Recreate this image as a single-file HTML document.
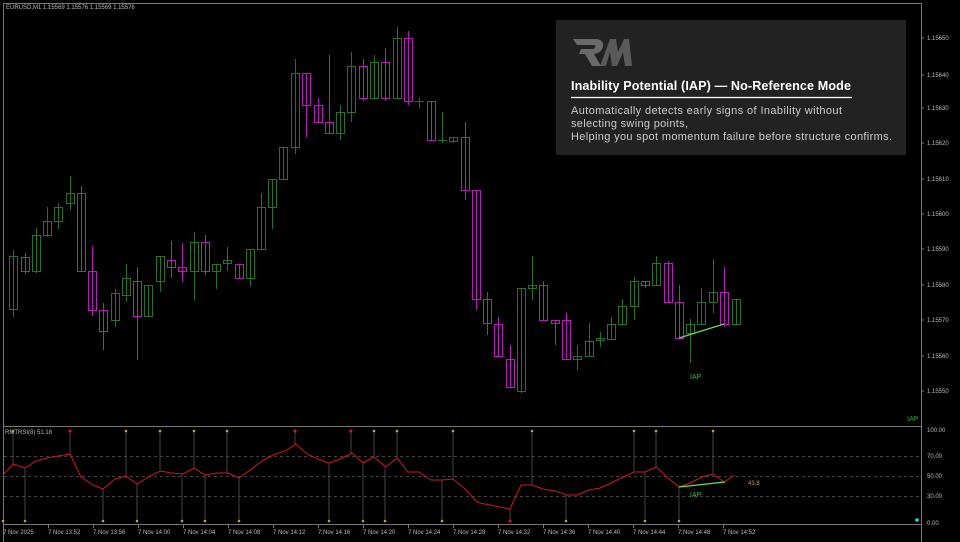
<!DOCTYPE html>
<html><head><meta charset="utf-8"><style>
html,body{margin:0;padding:0;background:#000;width:960px;height:542px;overflow:hidden}
svg{display:block}
.ax{font-family:"Liberation Sans",sans-serif;font-size:6px;fill:#bbb}
rect{fill:none}
</style></head><body>
<svg width="960" height="542" viewBox="0 0 960 542" xmlns="http://www.w3.org/2000/svg">
<rect x="0" y="0" width="960" height="542" style="fill:#000"/>
<polyline points="3.5,542 3.5,3.5 921.5,3.5 921.5,542" stroke="#777" fill="none"/>
<line x1="3" y1="426.5" x2="922" y2="426.5" stroke="#777"/>
<line x1="3" y1="524.5" x2="922" y2="524.5" stroke="#777"/>
<text x="6" y="9" class="ax">EURUSD,M1  1.15569 1.15576 1.15569 1.15576</text>
<g class="ax">
<text x="927" y="40">1.15650</text><text x="927" y="77">1.15640</text><text x="927" y="110">1.15630</text>
<text x="927" y="145">1.15620</text><text x="927" y="181">1.15610</text><text x="927" y="216">1.15600</text>
<text x="927" y="251">1.15590</text><text x="927" y="287">1.15580</text><text x="927" y="322">1.15570</text>
<text x="927" y="358">1.15560</text><text x="927" y="393">1.15550</text>
<text x="927" y="432">100.00</text><text x="927" y="458">70.00</text><text x="927" y="478">50.00</text>
<text x="927" y="498">30.00</text><text x="927" y="525">0.00</text>
</g>
<g stroke="#777">
<line x1="921" y1="38" x2="924" y2="38"/><line x1="921" y1="75" x2="924" y2="75"/><line x1="921" y1="108" x2="924" y2="108"/>
<line x1="921" y1="143" x2="924" y2="143"/><line x1="921" y1="179" x2="924" y2="179"/><line x1="921" y1="214" x2="924" y2="214"/>
<line x1="921" y1="249" x2="924" y2="249"/><line x1="921" y1="285" x2="924" y2="285"/><line x1="921" y1="320" x2="924" y2="320"/>
<line x1="921" y1="356" x2="924" y2="356"/><line x1="921" y1="391" x2="924" y2="391"/>
</g>
<text x="907" y="421" font-family="Liberation Sans,sans-serif" font-size="7" fill="#2fa82f">IAP</text>

<g style="stroke:#2a702a;fill:none">
<line x1="13.5" y1="250" x2="13.5" y2="317"/><rect x="9.5" y="256.5" width="8" height="53"/>
<line x1="36.5" y1="228" x2="36.5" y2="273"/><rect x="32.5" y="235.5" width="8" height="36"/>
<line x1="47.5" y1="207" x2="47.5" y2="237"/><rect x="43.5" y="221.5" width="8" height="14"/>
<line x1="58.5" y1="203" x2="58.5" y2="229"/><rect x="54.5" y="207.5" width="8" height="14"/>
<line x1="70.5" y1="176" x2="70.5" y2="210"/><rect x="66.5" y="193.5" width="8" height="10"/>
<line x1="115.5" y1="289" x2="115.5" y2="327"/><rect x="111.5" y="293.5" width="8" height="27"/>
<line x1="126.5" y1="264" x2="126.5" y2="302"/><rect x="122.5" y="278.5" width="8" height="17"/>
<line x1="148.5" y1="285" x2="148.5" y2="316"/><rect x="144.5" y="285.5" width="8" height="31"/>
<line x1="160.5" y1="256" x2="160.5" y2="292"/><rect x="156.5" y="256.5" width="8" height="25"/>
<line x1="194.5" y1="232" x2="194.5" y2="300"/><rect x="190.5" y="242.5" width="8" height="29"/>
<line x1="216.5" y1="264" x2="216.5" y2="289"/><rect x="212.5" y="264.5" width="8" height="7"/>
<line x1="227.5" y1="247" x2="227.5" y2="271"/><rect x="223.5" y="260.5" width="8" height="3"/>
<line x1="250.5" y1="249" x2="250.5" y2="286"/><rect x="246.5" y="249.5" width="8" height="29"/>
<line x1="261.5" y1="193" x2="261.5" y2="249"/><rect x="257.5" y="207.5" width="8" height="42"/>
<line x1="272.5" y1="179" x2="272.5" y2="229"/><rect x="268.5" y="179.5" width="8" height="28"/>
<line x1="283.5" y1="147" x2="283.5" y2="179"/><rect x="279.5" y="147.5" width="8" height="32"/>
<line x1="295.5" y1="59" x2="295.5" y2="154"/><rect x="291.5" y="73.5" width="8" height="74"/>
<line x1="340.5" y1="105" x2="340.5" y2="140"/><rect x="336.5" y="112.5" width="8" height="21"/>
<line x1="351.5" y1="52" x2="351.5" y2="122"/><rect x="347.5" y="66.5" width="8" height="46"/>
<line x1="374.5" y1="55" x2="374.5" y2="98"/><rect x="370.5" y="62.5" width="8" height="36"/>
<line x1="397.5" y1="27" x2="397.5" y2="98"/><rect x="393.5" y="38.5" width="8" height="60"/>
<line x1="419.5" y1="98" x2="419.5" y2="108"/><line x1="415" y1="101.5" x2="424" y2="101.5"/>
<line x1="442.5" y1="112" x2="442.5" y2="143"/><line x1="438" y1="140.5" x2="447" y2="140.5"/>
<line x1="453.5" y1="137" x2="453.5" y2="143"/><rect x="449.5" y="137.5" width="8" height="4"/>
<line x1="521.5" y1="288" x2="521.5" y2="393"/><rect x="517.5" y="288.5" width="8" height="103"/>
<line x1="532.5" y1="256" x2="532.5" y2="300"/><rect x="528.5" y="285.5" width="8" height="3"/>
<line x1="577.5" y1="345" x2="577.5" y2="370"/><rect x="573.5" y="356.5" width="8" height="3"/>
<line x1="589.5" y1="323" x2="589.5" y2="356"/><rect x="585.5" y="341.5" width="8" height="15"/>
<line x1="600.5" y1="332" x2="600.5" y2="347"/><rect x="596.5" y="338.5" width="8" height="2"/>
<line x1="611.5" y1="317" x2="611.5" y2="339"/><rect x="607.5" y="324.5" width="8" height="15"/>
<line x1="622.5" y1="299" x2="622.5" y2="324"/><rect x="618.5" y="306.5" width="8" height="18"/>
<line x1="634.5" y1="277" x2="634.5" y2="320"/><rect x="630.5" y="281.5" width="8" height="25"/>
<line x1="656.5" y1="256" x2="656.5" y2="285"/><rect x="652.5" y="263.5" width="8" height="22"/>
<line x1="690.5" y1="319" x2="690.5" y2="363"/><rect x="686.5" y="324.5" width="8" height="9"/>
<line x1="701.5" y1="288" x2="701.5" y2="324"/><rect x="697.5" y="302.5" width="8" height="22"/>
<line x1="713.5" y1="259" x2="713.5" y2="313"/><rect x="709.5" y="292.5" width="8" height="10"/>
<line x1="736.5" y1="299" x2="736.5" y2="324"/><rect x="732.5" y="299.5" width="8" height="25"/>
</g>
<g style="stroke:#b81cb8;fill:none">
<line x1="25.5" y1="253" x2="25.5" y2="274"/><rect x="21.5" y="257.5" width="8" height="14"/>
<line x1="81.5" y1="186" x2="81.5" y2="271"/><rect x="77.5" y="193.5" width="8" height="78"/>
<line x1="92.5" y1="246" x2="92.5" y2="316"/><rect x="88.5" y="271.5" width="8" height="39"/>
<line x1="103.5" y1="303" x2="103.5" y2="350"/><rect x="99.5" y="310.5" width="8" height="21"/>
<line x1="137.5" y1="267" x2="137.5" y2="360"/><rect x="133.5" y="281.5" width="8" height="35"/>
<line x1="171.5" y1="241" x2="171.5" y2="278"/><rect x="167.5" y="260.5" width="8" height="7"/>
<line x1="182.5" y1="243" x2="182.5" y2="282"/><rect x="178.5" y="267.5" width="8" height="4"/>
<line x1="205.5" y1="235" x2="205.5" y2="275"/><rect x="201.5" y="242.5" width="8" height="29"/>
<line x1="239.5" y1="264" x2="239.5" y2="278"/><rect x="235.5" y="264.5" width="8" height="14"/>
<line x1="306.5" y1="73" x2="306.5" y2="137"/><rect x="302.5" y="73.5" width="8" height="32"/>
<line x1="318.5" y1="98" x2="318.5" y2="122"/><rect x="314.5" y="105.5" width="8" height="17"/>
<line x1="329.5" y1="55" x2="329.5" y2="133"/><rect x="325.5" y="122.5" width="8" height="11"/>
<line x1="363.5" y1="59" x2="363.5" y2="101"/><rect x="359.5" y="66.5" width="8" height="32"/>
<line x1="385.5" y1="48" x2="385.5" y2="101"/><rect x="381.5" y="62.5" width="8" height="36"/>
<line x1="408.5" y1="31" x2="408.5" y2="105"/><rect x="404.5" y="38.5" width="8" height="63"/>
<line x1="431.5" y1="101" x2="431.5" y2="141"/><rect x="427.5" y="101.5" width="8" height="39"/>
<line x1="465.5" y1="122" x2="465.5" y2="200"/><rect x="461.5" y="137.5" width="8" height="53"/>
<line x1="476.5" y1="190" x2="476.5" y2="310"/><rect x="472.5" y="190.5" width="8" height="109"/>
<line x1="487.5" y1="292" x2="487.5" y2="335"/><rect x="483.5" y="299.5" width="8" height="24"/>
<line x1="498.5" y1="317" x2="498.5" y2="356"/><rect x="494.5" y="324.5" width="8" height="32"/>
<line x1="510.5" y1="345" x2="510.5" y2="387"/><rect x="506.5" y="359.5" width="8" height="28"/>
<line x1="543.5" y1="281" x2="543.5" y2="320"/><rect x="539.5" y="285.5" width="8" height="35"/>
<line x1="555.5" y1="320" x2="555.5" y2="345"/><rect x="551.5" y="320.5" width="8" height="3"/>
<line x1="566.5" y1="313" x2="566.5" y2="359"/><rect x="562.5" y="320.5" width="8" height="39"/>
<line x1="645.5" y1="281" x2="645.5" y2="288"/><rect x="641.5" y="281.5" width="8" height="4"/>
<line x1="668.5" y1="261" x2="668.5" y2="302"/><rect x="664.5" y="263.5" width="8" height="39"/>
<line x1="679.5" y1="285" x2="679.5" y2="338"/><rect x="675.5" y="302.5" width="8" height="36"/>
<line x1="724.5" y1="267" x2="724.5" y2="327"/><rect x="720.5" y="292.5" width="8" height="32"/>
</g>
<line x1="679" y1="338" x2="724" y2="324" stroke="#5fe05f" stroke-width="1.2"/>
<text x="690" y="379" font-family="Liberation Sans,sans-serif" font-size="7" fill="#2fc02f">IAP</text>

<rect x="556" y="20" width="350" height="135" style="fill:#222"/>
<path d="M573,39 L597,39 Q604,40 603,47 Q601,53 594,54 L601,66 L592,66 L585,54 L579,54 L581,49 L593,49 Q596,48 595,45 L577,45 Z" style="fill:#6a6a6a"/>
<path d="M600,66 L610,39 L616,39 L618,52 L624,39 L629,39 L632,66 L625,66 L623,52 L617,66 L612,66 L610,52 L606,66 Z" style="fill:#5a5a5a"/>
<text x="571" y="90" font-family="Liberation Sans,sans-serif" font-size="12.6" font-weight="bold" fill="#fff" textLength="280">Inability Potential (IAP) — No-Reference Mode</text>
<line x1="571" y1="97.5" x2="852" y2="97.5" stroke="#fff" stroke-width="1.2"/>
<g font-family="Liberation Sans,sans-serif" font-size="11" fill="#ccc">
<text x="571" y="114" textLength="271">Automatically detects early signs of Inability without</text>
<text x="571" y="127" textLength="117">selecting swing points,</text>
<text x="571" y="140" textLength="321">Helping you spot momentum failure before structure confirms.</text>
</g>

<g stroke="#444" stroke-dasharray="3,3">
<line x1="4" y1="456.5" x2="921" y2="456.5"/><line x1="4" y1="476.5" x2="921" y2="476.5"/><line x1="4" y1="496.5" x2="921" y2="496.5"/>
</g>
<text x="5" y="434" class="ax">RMTRSI(8) 51.18</text>
<g stroke="#555" stroke-width="0.8">
<line x1="13" y1="431" x2="13" y2="464"/><line x1="70" y1="431" x2="70" y2="454"/><line x1="126" y1="431" x2="126" y2="476"/>
<line x1="160" y1="431" x2="160" y2="470"/><line x1="194" y1="431" x2="194" y2="468"/><line x1="227" y1="431" x2="227" y2="473"/>
<line x1="295" y1="431" x2="295" y2="444"/><line x1="351" y1="431" x2="351" y2="453"/><line x1="374" y1="431" x2="374" y2="457"/>
<line x1="397" y1="431" x2="397" y2="458"/><line x1="453" y1="431" x2="453" y2="479"/><line x1="532" y1="431" x2="532" y2="485"/>
<line x1="634" y1="431" x2="634" y2="472"/><line x1="656" y1="431" x2="656" y2="467"/><line x1="713" y1="431" x2="713" y2="474"/>
<line x1="25" y1="468" x2="25" y2="521"/><line x1="103" y1="489" x2="103" y2="521"/><line x1="137" y1="484" x2="137" y2="521"/>
<line x1="182" y1="474" x2="182" y2="521"/><line x1="205" y1="475" x2="205" y2="521"/><line x1="239" y1="478" x2="239" y2="521"/>
<line x1="329" y1="463" x2="329" y2="521"/><line x1="363" y1="462" x2="363" y2="521"/><line x1="385" y1="467" x2="385" y2="521"/>
<line x1="442" y1="480" x2="442" y2="521"/><line x1="510" y1="509" x2="510" y2="521"/><line x1="566" y1="495" x2="566" y2="521"/>
<line x1="645" y1="472" x2="645" y2="521"/><line x1="679" y1="487" x2="679" y2="521"/>
</g>
<polyline fill="none" stroke="#d01818" stroke-width="1" points="3,475 13,464 25,468 36,461 47,458 58,456 70,454 81,477 93,485 103,489 115,479 126,476 137,484 148,477 160,471 172,473 183,474 194,468 205,475 217,473 228,473 239,478 250,470 262,461 273,455 285,451 296,444 307,454 318,459 329,463 340,459 352,453 363,463 374,457 386,467 397,458 408,472 419,472 431,480 442,480 453,479 465,489 477,502 480,503 510,509 521,485 532,485 543,489 555,491 567,495 577,495 589,490 600,488 611,483 623,477 634,472 645,472 656,467 667,477 679,487 690,483 702,477 713,474 724,482 735,475"/>
<line x1="679" y1="487" x2="725" y2="482" stroke="#5fe05f" stroke-width="1.2"/>
<text x="690" y="497" font-family="Liberation Sans,sans-serif" font-size="7" fill="#2fc02f">IAP</text>
<text x="748" y="485" font-family="Liberation Sans,sans-serif" font-size="6" fill="#c8a040">43.8</text>
<g style="fill:#c8a040">
<circle cx="13" cy="431" r="1.3"/><circle cx="126" cy="431" r="1.3"/><circle cx="160" cy="431" r="1.3"/><circle cx="194" cy="431" r="1.3"/>
<circle cx="227" cy="431" r="1.3"/><circle cx="374" cy="431" r="1.3"/><circle cx="397" cy="431" r="1.3"/><circle cx="453" cy="431" r="1.3"/>
<circle cx="532" cy="431" r="1.3"/><circle cx="634" cy="431" r="1.3"/><circle cx="656" cy="431" r="1.3"/><circle cx="713" cy="431" r="1.3"/>
<circle cx="3" cy="521" r="1.3"/><circle cx="25" cy="521" r="1.3"/><circle cx="103" cy="521" r="1.3"/><circle cx="137" cy="521" r="1.3"/>
<circle cx="182" cy="521" r="1.3"/><circle cx="205" cy="521" r="1.3"/><circle cx="239" cy="521" r="1.3"/><circle cx="329" cy="521" r="1.3"/>
<circle cx="363" cy="521" r="1.3"/><circle cx="385" cy="521" r="1.3"/><circle cx="442" cy="521" r="1.3"/><circle cx="566" cy="521" r="1.3"/>
<circle cx="645" cy="521" r="1.3"/><circle cx="679" cy="521" r="1.3"/>
</g>
<g style="fill:#e01030">
<circle cx="70" cy="431" r="1.5"/><circle cx="295" cy="431" r="1.5"/><circle cx="351" cy="431" r="1.5"/><circle cx="510" cy="521" r="1.5"/>
</g>
<circle cx="917" cy="520" r="1.8" style="fill:#20e0d0"/>
<g stroke="#777">
<line x1="3.5" y1="524" x2="3.5" y2="528"/><line x1="48.5" y1="524" x2="48.5" y2="528"/><line x1="93.5" y1="524" x2="93.5" y2="528"/>
<line x1="138.5" y1="524" x2="138.5" y2="528"/><line x1="183.5" y1="524" x2="183.5" y2="528"/><line x1="228.5" y1="524" x2="228.5" y2="528"/>
<line x1="273.5" y1="524" x2="273.5" y2="528"/><line x1="318.5" y1="524" x2="318.5" y2="528"/><line x1="363.5" y1="524" x2="363.5" y2="528"/>
<line x1="408.5" y1="524" x2="408.5" y2="528"/><line x1="453.5" y1="524" x2="453.5" y2="528"/><line x1="498.5" y1="524" x2="498.5" y2="528"/>
<line x1="543.5" y1="524" x2="543.5" y2="528"/><line x1="588.5" y1="524" x2="588.5" y2="528"/><line x1="633.5" y1="524" x2="633.5" y2="528"/>
<line x1="678.5" y1="524" x2="678.5" y2="528"/><line x1="723.5" y1="524" x2="723.5" y2="528"/>
</g>
<g class="ax">
<text x="3" y="534">7 Nov 2025</text><text x="48" y="534">7 Nov 13:52</text><text x="93" y="534">7 Nov 13:56</text>
<text x="138" y="534">7 Nov 14:00</text><text x="183" y="534">7 Nov 14:04</text><text x="228" y="534">7 Nov 14:08</text>
<text x="273" y="534">7 Nov 14:12</text><text x="318" y="534">7 Nov 14:16</text><text x="363" y="534">7 Nov 14:20</text>
<text x="408" y="534">7 Nov 14:24</text><text x="453" y="534">7 Nov 14:28</text><text x="498" y="534">7 Nov 14:32</text>
<text x="543" y="534">7 Nov 14:36</text><text x="588" y="534">7 Nov 14:40</text><text x="633" y="534">7 Nov 14:44</text>
<text x="678" y="534">7 Nov 14:48</text><text x="723" y="534">7 Nov 14:52</text>
</g>
</svg>
</body></html>
